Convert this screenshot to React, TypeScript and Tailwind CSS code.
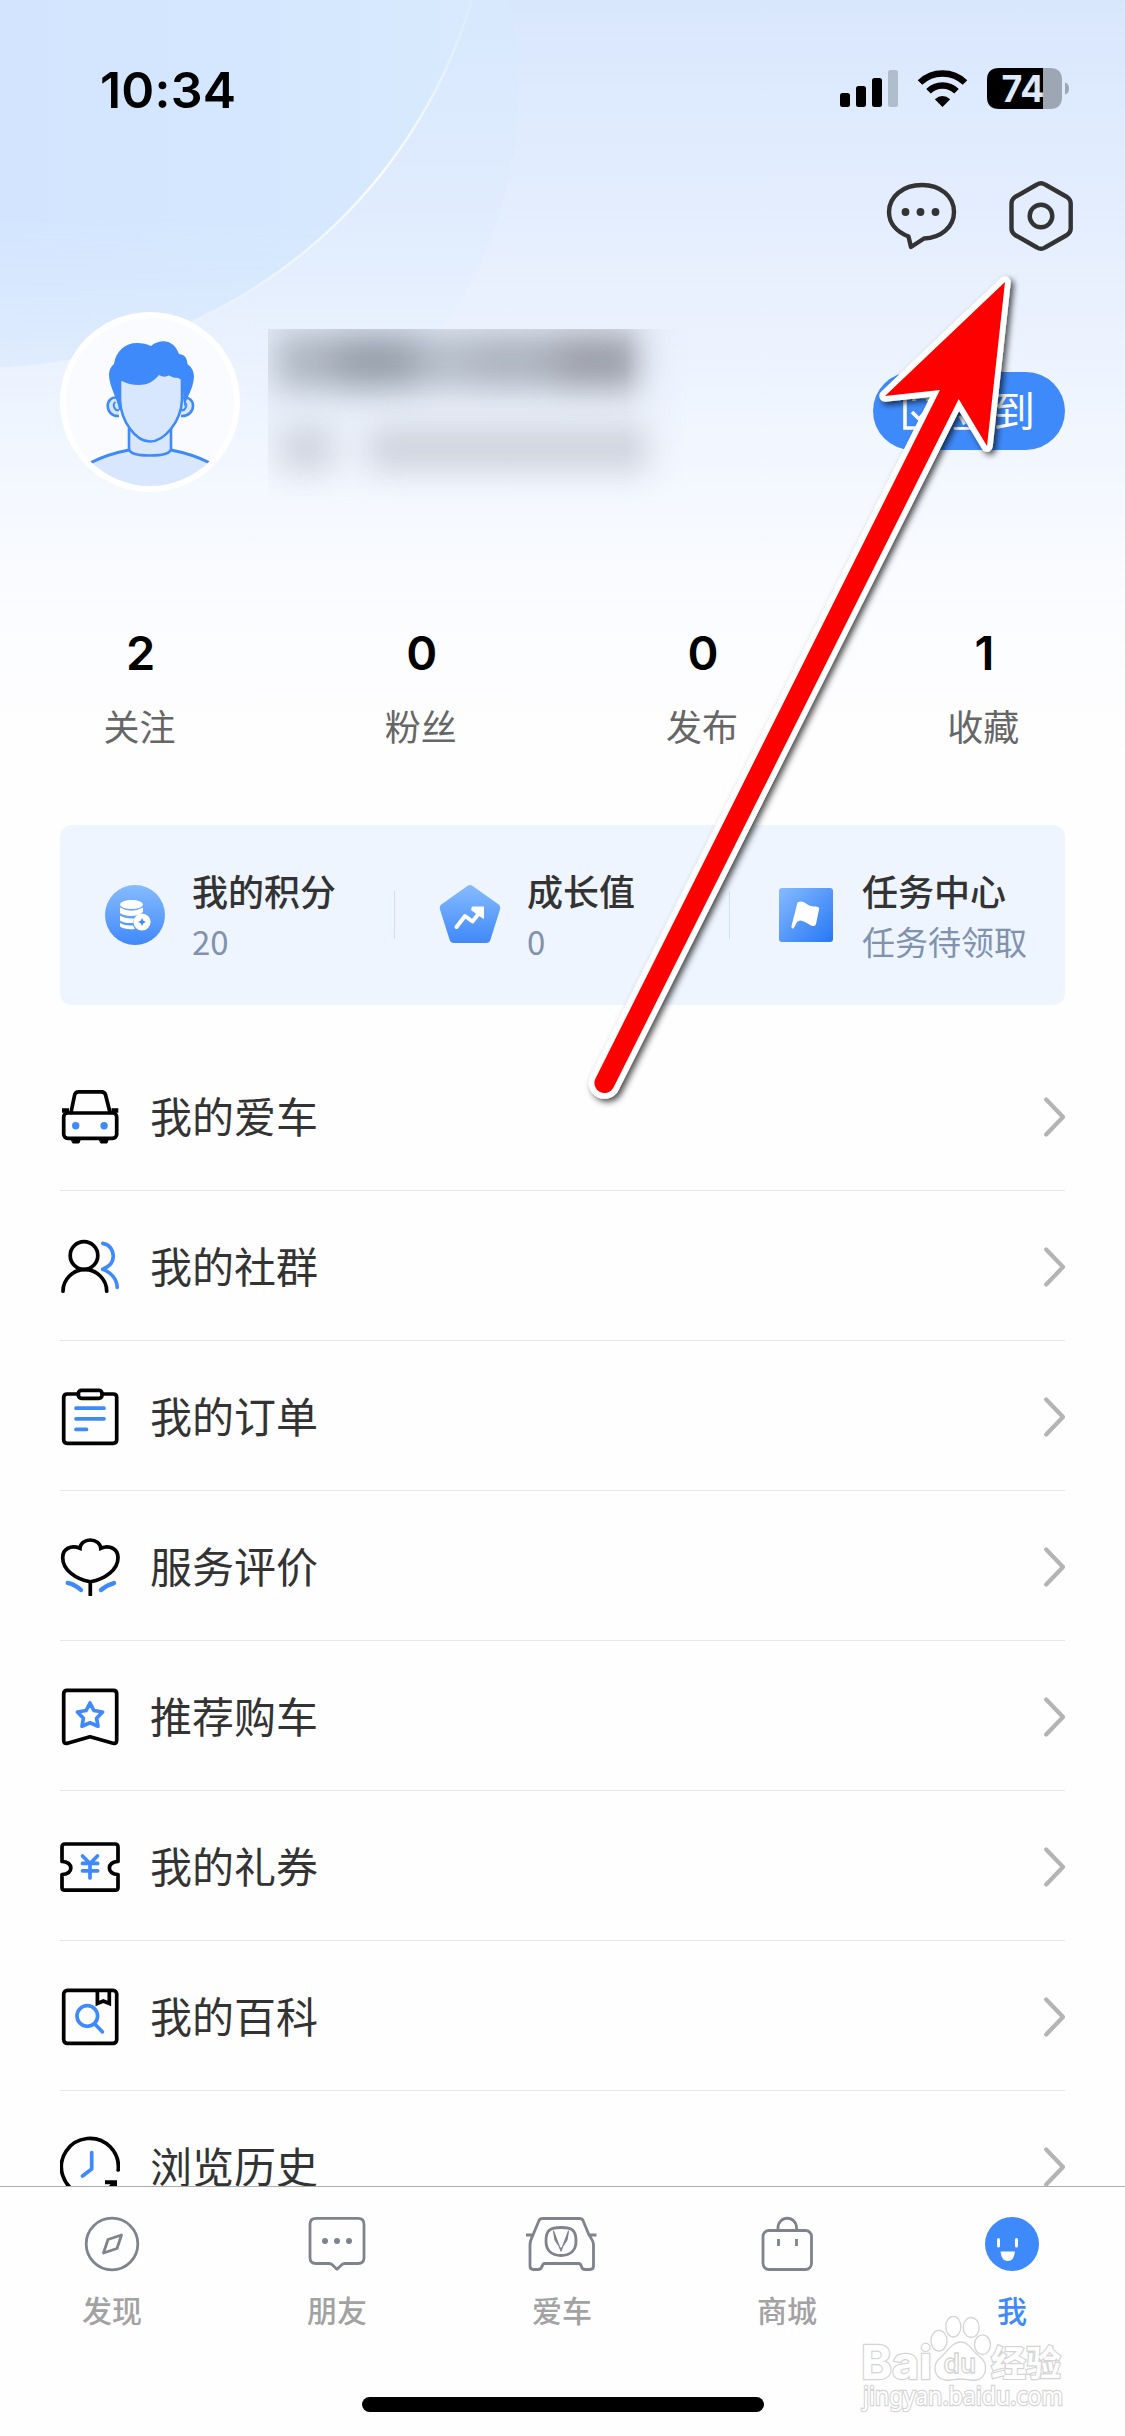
import React from 'react';

const BLUE = '#3f8afb';

const CarIcon = () => (
  <>
    <path d="M11 26.5L14.6 9Q15.3 5.8 18.5 5.8H41.5Q44.8 5.8 45.6 9L50 26.5" />
    <path d="M2 24.5H9M51.5 24.5H58.3" strokeWidth="4.4" strokeLinecap="butt" />
    <rect x="3.7" y="27" width="53" height="25.3" rx="4" />
    <path d="M11.5 53H20.5L19 57H13ZM39.5 53H48.5L47 57H41Z" fill="#000" strokeWidth="1" />
    <circle cx="15.7" cy="39.7" r="3.7" fill={BLUE} stroke="none" />
    <circle cx="44.1" cy="39.7" r="3.7" fill={BLUE} stroke="none" />
  </>
);
const PeopleIcon = () => (
  <>
    <circle cx="24" cy="19.5" r="13.8" />
    <path d="M3 55.2A21.8 21.5 0 0 1 46.7 55.2" />
    <path d="M42.7 7.3C50 8.5 53.3 14.5 53.3 20C53.3 26 50 30.5 42.7 33.3C51 36.5 57 43 57.2 51.5" stroke={BLUE} />
  </>
);
const OrderIcon = () => (
  <>
    <path d="M18.5 8H7.2Q3.7 8 3.7 11.5V53.8Q3.7 57.3 7.2 57.3H53.2Q56.7 57.3 56.7 53.8V11.5Q56.7 8 53.2 8H42" />
    <rect x="18.3" y="4.3" width="23.8" height="8" rx="3.2" />
    <path d="M16 22.2H44M16 32.8H44M16 43.4H26.5" stroke={BLUE} />
  </>
);
const FlowerIcon = () => (
  <>
    <path d="M30.3 45.8C15 43 2.7 33.5 2.7 21.7C2.7 12.5 11 8.8 20 12.3C20.3 7.5 24.5 4 30.3 4C36 4 40.4 7.5 40.8 12.3C49.5 8.8 58 12.5 58 21.7C58 33.5 45.5 43 30.3 45.8ZM30.3 46V59" strokeLinejoin="miter" />
    <path d="M7.7 46.9Q15 48.5 21 54M54 47.1Q47 49 41 54" stroke={BLUE} strokeWidth="4.4" />
  </>
);
const BookmarkIcon = () => (
  <>
    <path d="M7 4.4H53.3Q56.7 4.4 56.7 7.8V54.3Q56.7 58.2 53 57.2L30 50.8L7.5 57.2Q3.7 58.2 3.7 54.3V7.8Q3.7 4.4 7 4.4Z" />
    <path d="M30 17L33.8 24.5L42.6 26L36.6 32.2L38 40.2L30 36.8L22 40.2L23.4 32.2L17.4 26L26.2 24.5Z" stroke={BLUE} />
  </>
);
const TicketIcon = () => (
  <>
    <path d="M2 25.5V11Q2 8 5 8H55Q58 8 58 11V25.5C46.5 25.5 46.5 38.5 58 38.5V51.5Q58 54.2 55 54.2H5Q2 54.2 2 51.5V38.5C13.8 38.5 13.8 25.5 2 25.5Z" />
    <path d="M22.5 20L30 27.5L37.5 20M22.5 27.4H37.7M22.5 34.8H37.7M30 27.5V42" stroke={BLUE} />
  </>
);
const WikiIcon = () => (
  <>
    <rect x="3.7" y="4.4" width="53" height="53" rx="3.6" />
    <path d="M37.4 5V17.5L43.3 15L49.3 17.5V5" strokeLinejoin="miter" />
    <circle cx="27.3" cy="30" r="10.3" stroke={BLUE} />
    <path d="M35 38.3L42.3 45.8" stroke={BLUE} />
  </>
);
const HistoryIcon = () => (
  <>
    <path d="M58.2 34A28.5 28.5 0 1 0 44 55.6" />
    <path d="M45 46.3H55V56M54 47.5L46 56" strokeWidth="4" strokeLinecap="butt" strokeLinejoin="miter" />
    <path d="M31.7 16.5V33L22.5 40" stroke={BLUE} />
  </>
);

const rows = [
  { label: '我的爱车', icon: <CarIcon /> },
  { label: '我的社群', icon: <PeopleIcon /> },
  { label: '我的订单', icon: <OrderIcon /> },
  { label: '服务评价', icon: <FlowerIcon /> },
  { label: '推荐购车', icon: <BookmarkIcon /> },
  { label: '我的礼券', icon: <TicketIcon /> },
  { label: '我的百科', icon: <WikiIcon /> },
  { label: '浏览历史', icon: <HistoryIcon /> },
];

function StatusBar() {
  return (
    <div className="flex h-[132px] shrink-0 items-start justify-between pl-[100px] pr-[56px] pt-[67px]">
      <div className="mt-px font-['Inter'] text-[50px] font-semibold leading-[44px] tracking-[0.2px] text-black">10:34</div>
      <svg width="229" height="44" viewBox="0 0 229 44" className="-mt-px">
        <rect x="0" y="27" width="10" height="14" rx="2.5" />
        <rect x="16" y="20" width="10" height="21" rx="2.5" />
        <rect x="32" y="12" width="10" height="29" rx="2.5" />
        <rect x="48" y="4" width="10" height="37" rx="2.5" fill="#b0bdcc" />
        <path d="M80 16.500A32.500 32.500 0 0 1 125 16.500" fill="none" stroke="#000" strokeWidth="6.500" />
        <path d="M88.500 25.300A20 20 0 0 1 116.500 25.300" fill="none" stroke="#000" strokeWidth="6.500" />
        <path d="M94.800 33.300Q102.500 26.500 110.200 33.300L102.500 41Z" />
        <path d="M159 2H203V43H159Q147 43 147 31V14Q147 2 159 2Z" />
        <path d="M203 2H210Q222 2 222 14V31Q222 43 210 43H203Z" fill="#9da6b3" />
        <path d="M225 16.500Q229 17.500 229 22.500Q229 27.500 225 28.500Z" fill="#9da6b3" />
        <text x="161.500" y="36" fontFamily="Inter" fontWeight="700" fontSize="37" textLength="43" lengthAdjust="spacingAndGlyphs" fill="#dde9fc">74</text>
      </svg>
    </div>
  );
}

function Avatar() {
  return (
    <svg width="180" height="180" viewBox="0 0 180 180">
      <defs>
        <clipPath id="face"><circle cx="90" cy="90" r="84" /></clipPath>
      </defs>
      <circle cx="90" cy="90" r="90" fill="#fff" />
      <circle cx="90" cy="90" r="84" fill="#f9fbff" />
      <g clipPath="url(#face)" stroke={BLUE} strokeWidth="2.600" fill="#d8e6fe">
        <path d="M28 152Q48 142 69 138L111 138Q132 142 152 152V180H28Z" stroke="none" />
        <path d="M31 150.500Q48 142 69 138M111 138Q132 142 149 150.500" fill="none" strokeWidth="3" />
        <path d="M69 116V137Q70 143.500 90 143.500Q110 143.500 111 137V116" />
        <path d="M59 86C44 82 44 105 59 104M121 86C137 82 137 105 121 104" />
        <path d="M55.500 90Q52.500 92 54.500 96Q56 99 59 98M124.500 90Q127.500 92 125.500 96Q124 99 121 98" fill="none" strokeWidth="2" />
        <path d="M60 66Q90 50 122 66V88C121 110 104 129.500 90 129.500C76 129.500 61 110 60 88Z" />
        <path d="M59 98C58 88 49 74 49 63Q49 56 54 52C56 39 65 31 77 31Q85 31 91 34Q98 28.500 106 29.500C114 31 117 37 119 42C126 43 127 47 127.500 52Q134 57 134 65C133 78 127 84 124.500 95C123 88 123 74 122.500 71Q122 67 118 66Q113 66 109 63.500Q104 66 99 63C93 70 87 73 79 73Q69 73 62 69Q60 69 60 75V98Z" fill={BLUE} stroke="none" />
      </g>
    </svg>
  );
}

function Profile() {
  return (
    <div className="flex h-[180px] shrink-0 items-start pl-[60px] pr-[60px]">
      <Avatar />
      <div className="ml-[28px] mt-[17px] h-[175px] w-[420px] overflow-hidden bg-linear-to-b from-[#d6dfea]/30 to-transparent [mask-image:linear-gradient(to_right,#000_85%,transparent)]">
        <div className="ml-[8px] mt-[4px] flex h-[56px] w-[366px] blur-[17px]">
          <div className="h-full w-[60px] bg-[#adb5c0]" />
          <div className="h-full w-[80px] bg-[#979fab]" />
          <div className="h-full w-[60px] bg-[#b4bcc8]" />
          <div className="h-full flex-1 bg-[#acb3be]" />
          <div className="h-full w-[86px] bg-[#9b9ea8]" />
        </div>
        <div className="ml-[12px] mt-[37px] flex h-[44px] w-[378px] gap-[34px] blur-[16px]">
          <div className="h-full w-[54px] bg-[#ced3dd]" />
          <div className="h-full flex-1 bg-[#ced2dc]" />
        </div>
      </div>
      <div className="ml-auto mt-[60px] flex h-[78px] w-[192px] items-center justify-center gap-[12px] rounded-full bg-[#3f8afb] text-[42px] leading-none text-white">
        <svg width="36" height="38" viewBox="0 0 36 38" fill="none" stroke="#fff" strokeWidth="3.600">
          <path d="M10 5H2V36H34V5H26M12 5H24M9 20L16 27L27 15M11 0V9M25 0V9" />
        </svg>
        <span className="-mt-[5px] w-[84px] whitespace-nowrap">签到</span>
      </div>
    </div>
  );
}

const stats = [['2', '关注'], ['0', '粉丝'], ['0', '发布'], ['1', '收藏']];

function Stats() {
  return (
    <div className="mt-[130px] grid h-[203px] shrink-0 grid-cols-4 text-center">
      {stats.map(([n, l]) => (
        <div key={l}>
          <div className="font-['Inter'] text-[47px] font-semibold leading-[62px] text-black">{n}</div>
          <div className="-ml-[2px] mt-[14px] text-[36px] leading-[54px] text-[#666]">{l}</div>
        </div>
      ))}
    </div>
  );
}

const tiles = [
  {
    title: '我的积分', sub: '20',
    icon: (
      <>
        <circle cx="30" cy="30" r="30" fill="url(#tile)" />
        <g fill="#fff">
          <ellipse cx="26.500" cy="19.500" rx="11.500" ry="4.500" />
          <path d="M15 22.500Q26 29 38 22.500V27Q33 31 26 31Q18 30.500 15 28ZM15 30.500Q20 34 29 33.500L28 38Q19 38.500 15 35.500ZM15 38Q20 41 28 40.500L30 44Q20 45 15 41.500Z" />
          <circle cx="37" cy="37" r="8.600" />
        </g>
        <path d="M37 33L38.300 35.700L41 37L38.300 38.300L37 41L35.700 38.300L33 37L35.700 35.700Z" fill={BLUE} />
      </>
    ),
  },
  {
    title: '成长值', sub: '0',
    icon: (
      <>
        <path d="M27 1.200Q30-1 33 1.200L58 19Q61 21 60 24.500L50.500 54.500Q49.500 58 46 58H14Q10.500 58 9.500 54.500L0 24.500Q-1 21 2 19Z" fill="url(#tile)" />
        <path d="M16.500 42L25 31L32.500 36.500L42 24.500" stroke="#fff" strokeWidth="4" fill="none" strokeLinecap="round" strokeLinejoin="round" />
        <path d="M32 21.500H44V34L39 31L31 25Z" fill="#fff" />
      </>
    ),
  },
  {
    title: '任务中心', sub: '任务待领取',
    icon: (
      <>
        <rect x="4" y="3" width="54" height="54" rx="3" fill="url(#flag)" />
        <path d="M22.500 17.500Q27 15 31 18.500T41 21.500Q45 22 44 24.500L41 39Q40.500 42 36 40.500L30 37Q25 34 22 37L18.500 43.500Q16 44 16.500 41Z" fill="#fff" />
      </>
    ),
  },
];

function Card() {
  return (
    <div className="mx-[60px] flex h-[180px] shrink-0 items-center rounded-[12px] bg-[#eef5ff]">
      {tiles.map((t, i) => (
        <React.Fragment key={t.title}>
          {i > 0 && <div className="-ml-px h-[48px] w-px bg-[#cddffa]" />}
          <div className="flex h-full w-[335px] pl-[45px]">
            <svg width="60" height="60" viewBox="0 0 60 60" className="mt-[60px] shrink-0 overflow-visible">{t.icon}</svg>
            <div className="ml-[27px] mt-[39px] whitespace-nowrap">
              <div className="text-[36px] font-medium leading-[52px] text-[#333]">{t.title}</div>
              <div className="text-[33px] leading-[50px] text-[#8092ae]">{t.sub}</div>
            </div>
          </div>
        </React.Fragment>
      ))}
    </div>
  );
}

function List() {
  return (
    <div className="mt-[36px] min-h-0 flex-1 overflow-hidden px-[60px]">
      {rows.map((r) => (
        <div key={r.label} className="flex h-[150px] items-center border-b border-[#e6e6e6]">
          <svg width="60" height="60" viewBox="0 0 60 60" fill="none" stroke="#000" strokeWidth="3.700" strokeLinecap="round" strokeLinejoin="round">{r.icon}</svg>
          <span className="-mt-[2px] ml-[30px] text-[42px] leading-[60px] text-[#333]">{r.label}</span>
          <svg width="22" height="40" viewBox="0 0 22 40" className="ml-auto mt-[2px]" fill="none" stroke="#b4b4b4" strokeWidth="4.200" strokeLinecap="round" strokeLinejoin="round">
            <path d="M3.200 2.500L20 20L3.200 37.500" />
          </svg>
        </div>
      ))}
    </div>
  );
}

const tabs = [
  {
    label: '发现',
    icon: (
      <>
        <circle cx="36" cy="27" r="25.800" />
        <path d="M45.500 18L32 22.500L27.500 36L41 31.500Z" />
      </>
    ),
  },
  {
    label: '朋友',
    icon: (
      <>
        <path d="M15 1.300H57Q63 1.300 63 7.300V40.500Q63 46.500 57 46.500H44Q42 46.500 40.500 48L36 52.300L31.500 48Q30 46.500 28 46.500H15Q9 46.500 9 40.500V7.300Q9 1.300 15 1.300Z" />
        <g fill="#7e838e" stroke="none"><circle cx="24" cy="24" r="3" /><circle cx="36" cy="24" r="3" /><circle cx="48" cy="24" r="3" /></g>
      </>
    ),
  },
  {
    label: '爱车',
    icon: (
      <>
        <path d="M16.500 1.500H53.500Q56 1.500 57 3.500L63 18Q67.500 24 67.500 28V49Q67.500 52.500 64 52.500H59Q56 52.500 55.500 49.500L55 48.500Q54.500 46.500 52.500 46.500H19Q17 46.500 16.500 48.500L16 49.500Q15 52.500 12 52.500H7.500Q4 52.500 4 49V28Q4 24 7 18L13 3.500Q14 1.500 16.500 1.500ZM0 18H7M63 18H70.500" />
        <path d="M35 10.500C46 10.500 50 13 50 24C50 33 45 38.500 35 38.500C25 38.500 20 33 20 24C20 13 24 10.500 35 10.500Z" />
        <path d="M27.500 14L35 34L42.500 14L41 23L35 32L29 23Z" fill="#7e838e" strokeWidth="1.200" />
      </>
    ),
  },
  {
    label: '商城',
    icon: (
      <>
        <rect x="12" y="13.500" width="48.500" height="39" rx="6" />
        <path d="M27 13V10.500A9.200 9.200 0 0 1 45.500 10.500V13M27.500 22V29M45.500 22V29" />
      </>
    ),
  },
  {
    label: '我', active: true,
    icon: (
      <>
        <circle cx="36" cy="27" r="27" fill={BLUE} stroke="none" />
        <path d="M22.500 22.500V29M40.500 22.500V29" stroke="#fff" strokeWidth="3" strokeLinecap="round" />
        <path d="M24.500 34.500H39Q38 44 31.700 44Q25.500 44 24.500 34.500Z" fill="#fff" stroke="none" />
      </>
    ),
  },
];

function TabBar() {
  return (
    <div className="flex h-[250px] shrink-0 flex-col items-center border-t border-[#adadad] bg-[#fefefe]">
      <div className="grid h-[210px] w-full grid-cols-5">
        {tabs.map((t) => (
          <div key={t.label} className="flex flex-col items-center pr-px pt-[30px]">
            <svg width="72" height="54" viewBox="0 0 72 54" fill="none" stroke="#7e838e" strokeWidth="2.800" strokeLinejoin="round" className="overflow-visible">{t.icon}</svg>
            <span className={t.active ? 'mt-[16px] text-[30px] font-medium leading-[45px] text-[#3f8afb]' : 'mt-[16px] text-[30px] font-medium leading-[45px] text-[#a2a2a2]'}>{t.label}</span>
          </div>
        ))}
      </div>
      <div className="h-[15px] w-[402px] rounded-full bg-black" />
    </div>
  );
}

function Watermark() {
  return (
    <svg width="206" height="104" viewBox="0 0 206 104" className="absolute left-[860px] top-[2312px]" fill="#fff" stroke="#d4d4d4" strokeWidth="1.300">
      <g paintOrder="stroke" fontFamily="Inter, 'Noto Sans CJK SC', sans-serif" fontWeight="700">
        <text x="1" y="67" fontSize="46" textLength="71" lengthAdjust="spacingAndGlyphs" strokeWidth="2.400">Bai</text>
        <text x="131" y="64" fontSize="35" textLength="70" lengthAdjust="spacingAndGlyphs" strokeWidth="2.400">经验</text>
      </g>
      <ellipse cx="79" cy="28.700" rx="8" ry="10.300" />
      <ellipse cx="93.300" cy="14.700" rx="7.500" ry="10.300" />
      <ellipse cx="111.200" cy="15.500" rx="8" ry="10" />
      <ellipse cx="122.500" cy="32.700" rx="8" ry="9.800" />
      <path d="M100.500 30C109 30 112 39 119 44C130 52 126 67 116 68C108 69 108 67 100.500 67C93 67 92 69 85 68C73 66 72 52 81 45C88 39 92 30 100.500 30Z" />
      <text x="83.500" y="60.500" fontFamily="Inter" fontWeight="600" fontSize="27" textLength="32.500" lengthAdjust="spacingAndGlyphs" strokeWidth="1.300">du</text>
      <text x="3" y="93" fontFamily="'Noto Sans'" fontSize="25" textLength="200" lengthAdjust="spacingAndGlyphs" paintOrder="stroke" strokeWidth="2.400">jingyan.baidu.com</text>
    </svg>
  );
}

export default function App() {
  return (
    <div className="relative flex h-[2436px] w-[1125px] flex-col overflow-hidden bg-[#fefefe] font-['Noto_Sans_CJK_SC','Liberation_Sans',sans-serif]">
      <svg width="1125" height="760" viewBox="0 0 1125 760" className="absolute left-0 top-0">
        <defs>
          <linearGradient id="sky" x1="0" y1="0" x2="0" y2="1">
            <stop offset="0" stopColor="#d9e7fd" />
            <stop offset="0.260" stopColor="#e3edfe" />
            <stop offset="0.400" stopColor="#eaf1fe" />
            <stop offset="0.600" stopColor="#f2f7ff" />
            <stop offset="0.800" stopColor="#fbfcff" />
            <stop offset="1" stopColor="#fefefe" />
          </linearGradient>
          <linearGradient id="orb" x1="0" y1="0" x2="493" y2="0" gradientUnits="userSpaceOnUse">
            <stop offset="0" stopColor="#d3e5fe" />
            <stop offset="0.500" stopColor="#d4e7fe" />
            <stop offset="1" stopColor="#d9eafd" />
          </linearGradient>
          <linearGradient id="orbFade" x1="0" y1="0" x2="0" y2="368" gradientUnits="userSpaceOnUse">
            <stop offset="0.600" stopColor="#fff" />
            <stop offset="1" stopColor="#fff" stopOpacity="0.450" />
          </linearGradient>
          <mask id="orbMask" maskUnits="userSpaceOnUse" x="0" y="0" width="600" height="400">
            <rect width="600" height="400" fill="url(#orbFade)" />
          </mask>
          <linearGradient id="halo" x1="0" y1="0" x2="0" y2="508" gradientUnits="userSpaceOnUse">
            <stop offset="0" stopColor="#d8e9fd" stopOpacity="0.800" />
            <stop offset="0.900" stopColor="#e0edfe" stopOpacity="0" />
          </linearGradient>
          <linearGradient id="rim" x1="0" y1="0" x2="0" y2="330" gradientUnits="userSpaceOnUse">
            <stop offset="0" stopColor="#fff" stopOpacity="0.100" />
            <stop offset="0.550" stopColor="#fff" stopOpacity="0.850" />
            <stop offset="1" stopColor="#fff" stopOpacity="0.200" />
          </linearGradient>
          <linearGradient id="tile" x1="0" y1="0" x2="0" y2="1">
            <stop offset="0" stopColor="#86bbff" />
            <stop offset="1" stopColor="#4089fa" />
          </linearGradient>
          <linearGradient id="flag" x1="0" y1="0" x2="1" y2="1">
            <stop offset="0" stopColor="#86bbff" />
            <stop offset="1" stopColor="#2777f4" />
          </linearGradient>
        </defs>
        <rect width="1125" height="760" fill="url(#sky)" />
        <circle cx="100" cy="90" r="418" fill="url(#halo)" />
        <circle cx="-21" cy="-146" r="514" fill="url(#orb)" mask="url(#orbMask)" />
        <path d="M493 -146A514 514 0 0 1 180 327" fill="none" stroke="url(#rim)" strokeWidth="2.400" />
      </svg>

      <div className="relative flex min-h-0 flex-1 flex-col">
        <StatusBar />
        <div className="flex h-[180px] shrink-0 justify-end gap-[45px] pr-[48px] pt-[47px]">
          <svg width="76" height="76" viewBox="0 0 76 76" fill="none" stroke="#333" strokeWidth="4.400" strokeLinejoin="round">
            <path d="M38 6C56.500 6 70 17.500 70 33C70 48 57 59 40 59.500L27 68L24.500 57.500C13 53 5 44.500 5 33C5 17.500 19 6 38 6Z" />
            <g fill="#333" stroke="none"><circle cx="21.500" cy="33" r="3.900" /><circle cx="36.500" cy="33" r="3.900" /><circle cx="51.500" cy="33" r="3.900" /></g>
          </svg>
          <svg width="72" height="76" viewBox="0 0 72 76" fill="none" stroke="#333" strokeWidth="4.400" strokeLinejoin="round">
            <path d="M32 5.500Q36 3 40 5.500L62 18Q65.700 20.500 65.700 24.500V49.500Q65.700 53.500 62 56L40 68.500Q36 71 32 68.500L10 56Q6.500 53.500 6.500 49.500V24.500Q6.500 20.500 10 18Z" />
            <circle cx="36" cy="37" r="11.300" />
          </svg>
        </div>
        <Profile />
        <Stats />
        <Card />
        <List />
      </div>
      <TabBar />
      <Watermark />

      <svg width="1125" height="1150" viewBox="0 0 1125 1150" className="pointer-events-none absolute left-0 top-0">
        <defs>
          <filter id="shade" x="-20%" y="-10%" width="140%" height="120%">
            <feDropShadow dx="3" dy="3" stdDeviation="3" floodColor="#000" floodOpacity="0.700" />
          </filter>
        </defs>
        <path d="M1005 282L885 396L940 390L595.500 1078.500A9.800 9.800 0 0 0 613.500 1087.500L958.700 399L987 446Z" fill="#f00" stroke="#fff" strokeWidth="11.500" strokeLinejoin="round" paintOrder="stroke" filter="url(#shade)" />
      </svg>
    </div>
  );
}
